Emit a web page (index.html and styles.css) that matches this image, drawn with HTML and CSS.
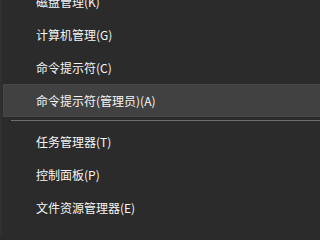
FILE: index.html
```html
<!DOCTYPE html>
<html lang="zh-CN">
<head>
<meta charset="utf-8">
<link rel="stylesheet" href="styles.css">
</head>
<body>
<div class="menu">
  <div class="item">磁盘管理(K)</div>
  <div class="item">计算机管理(G)</div>
  <div class="item">命令提示符(C)</div>
  <div class="item active">命令提示符(管理员)(A)</div>
  <div class="sep"></div>
  <div class="item">任务管理器(T)</div>
  <div class="item">控制面板(P)</div>
  <div class="item">文件资源管理器(E)</div>
</div>
</body>
</html>
```
FILE: styles.css
```css
html, body {
  margin: 0;
  padding: 0;
  background: #2b2b2b;
  overflow: hidden;
}
.menu {
  min-height: 250px;
  box-sizing: border-box;
  border-left: 2px solid #303030;
  display: flex;
  flex-direction: column;
  margin-top: -15px;
  font-family: "Noto Sans CJK SC", "Noto Sans", sans-serif;
  font-size: 12px;
  color: #f5f5f5;
}
.item {
  height: 33px;
  flex: none;
  display: flex;
  align-items: center;
  padding-left: 33px;
  margin-left: 1px;
  box-sizing: border-box;
  white-space: nowrap;
}
.item.active {
  background: #414141;
  border: 1px solid #474747;
  border-right: none;
  padding-left: 32px;
}
.sep {
  flex: none;
  height: 1px;
  margin: 3px 0 4px 9px;
  background: #6e6e6e;
}
```
